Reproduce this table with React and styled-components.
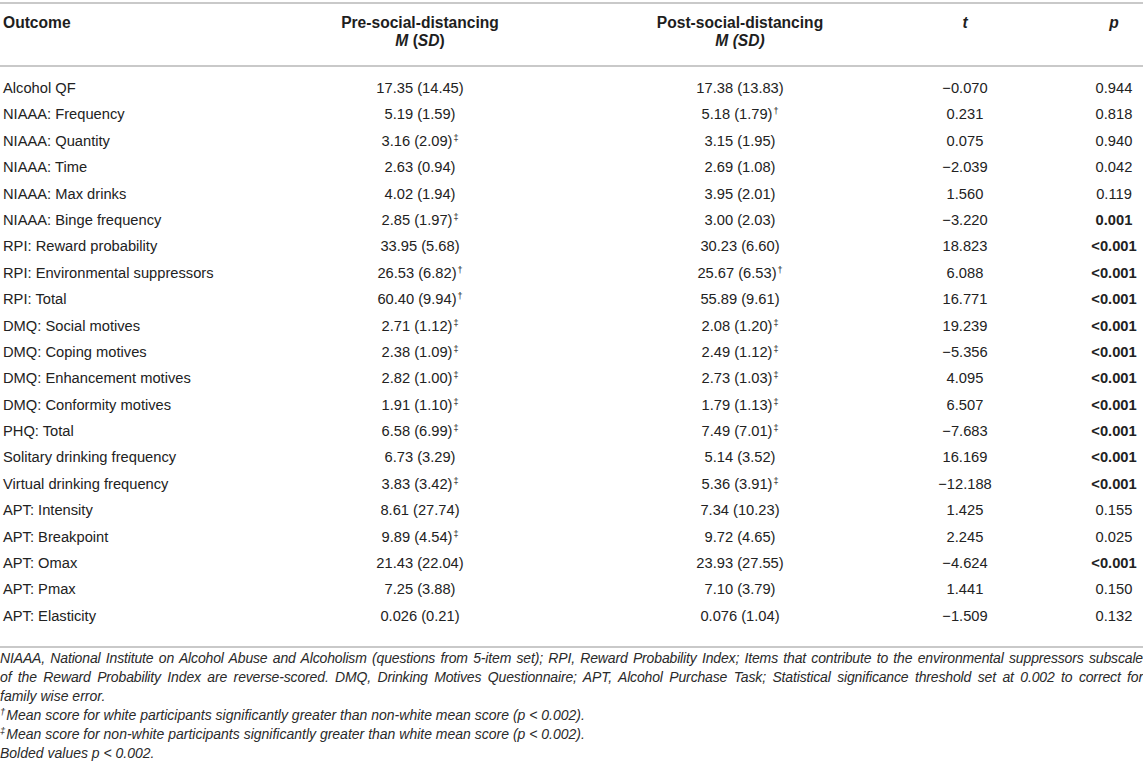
import React from 'react';
import styled, { createGlobalStyle } from 'styled-components';

const GlobalStyle = createGlobalStyle`
  html, body {
    margin: 0;
    padding: 0;
    background: #ffffff;
  }
  body {
    font-family: "Liberation Sans", Arial, Helvetica, sans-serif;
    color: #222222;
  }
`;

const Page = styled.div`
  width: 1143px;
  padding-top: 2px;
`;

const Table = styled.table`
  width: 1143px;
  table-layout: fixed;
  border-collapse: collapse;
  border-top: 2px solid #c9c9c9;
  border-bottom: 2px solid #c9c9c9;
`;

const HeadCell = styled.th`
  font-weight: bold;
  font-size: 15.6px;
  line-height: 18px;
  vertical-align: top;
  padding: 10px 0 15px ${(p) => p.$pl || 0}px;
  text-align: ${(p) => p.$align || 'center'};
  border-bottom: 2px solid #c9c9c9;
  color: #1e1e1e;
`;

const Row = styled.tr`
  height: 26.4px;
  &:first-child td {
    padding-top: 13px;
  }
  &:last-child td {
    padding-bottom: 21px;
  }
`;

const Cell = styled.td`
  font-size: 14.7px;
  line-height: 17px;
  padding: 4.7px 0 4.7px ${(p) => p.$pl || 0}px;
  text-align: ${(p) => p.$align || 'center'};
  font-weight: ${(p) => (p.$bold ? 'bold' : 'normal')};
  white-space: nowrap;
`;

const Mark = styled.sup`
  font-size: 9px;
  line-height: 0;
  vertical-align: 5px;
  margin-left: 1px;
`;

const Notes = styled.div`
  font-style: italic;
  font-size: 14px;
  line-height: 19px;
  color: #2a2a2a;
  padding-top: 1px;
`;

const Line = styled.div`
  text-align: ${(p) => (p.$justify ? 'justify' : 'left')};
  text-align-last: ${(p) => (p.$justify ? 'justify' : 'left')};
  letter-spacing: ${(p) => p.$tight || 0}px;
`;

const NoteMark = styled.sup`
  font-size: 9.5px;
  line-height: 0;
  vertical-align: 5px;
  margin-right: 1px;
`;

const D = '\u2020';
const DD = '\u2021';

const rows = [
  ['Alcohol QF', '17.35 (14.45)', '', '17.38 (13.83)', '', '\u22120.070', '0.944'],
  ['NIAAA: Frequency', '5.19 (1.59)', '', '5.18 (1.79)', D, '0.231', '0.818'],
  ['NIAAA: Quantity', '3.16 (2.09)', DD, '3.15 (1.95)', '', '0.075', '0.940'],
  ['NIAAA: Time', '2.63 (0.94)', '', '2.69 (1.08)', '', '\u22122.039', '0.042'],
  ['NIAAA: Max drinks', '4.02 (1.94)', '', '3.95 (2.01)', '', '1.560', '0.119'],
  ['NIAAA: Binge frequency', '2.85 (1.97)', DD, '3.00 (2.03)', '', '\u22123.220', '0.001', true],
  ['RPI: Reward probability', '33.95 (5.68)', '', '30.23 (6.60)', '', '18.823', '<0.001', true],
  ['RPI: Environmental suppressors', '26.53 (6.82)', D, '25.67 (6.53)', D, '6.088', '<0.001', true],
  ['RPI: Total', '60.40 (9.94)', D, '55.89 (9.61)', '', '16.771', '<0.001', true],
  ['DMQ: Social motives', '2.71 (1.12)', DD, '2.08 (1.20)', DD, '19.239', '<0.001', true],
  ['DMQ: Coping motives', '2.38 (1.09)', DD, '2.49 (1.12)', DD, '\u22125.356', '<0.001', true],
  ['DMQ: Enhancement motives', '2.82 (1.00)', DD, '2.73 (1.03)', DD, '4.095', '<0.001', true],
  ['DMQ: Conformity motives', '1.91 (1.10)', DD, '1.79 (1.13)', DD, '6.507', '<0.001', true],
  ['PHQ: Total', '6.58 (6.99)', DD, '7.49 (7.01)', DD, '\u22127.683', '<0.001', true],
  ['Solitary drinking frequency', '6.73 (3.29)', '', '5.14 (3.52)', '', '16.169', '<0.001', true],
  ['Virtual drinking frequency', '3.83 (3.42)', DD, '5.36 (3.91)', DD, '\u221212.188', '<0.001', true],
  ['APT: Intensity', '8.61 (27.74)', '', '7.34 (10.23)', '', '1.425', '0.155'],
  ['APT: Breakpoint', '9.89 (4.54)', DD, '9.72 (4.65)', '', '2.245', '0.025'],
  ['APT: Omax', '21.43 (22.04)', '', '23.93 (27.55)', '', '\u22124.624', '<0.001', true],
  ['APT: Pmax', '7.25 (3.88)', '', '7.10 (3.79)', '', '1.441', '0.150'],
  ['APT: Elasticity', '0.026 (0.21)', '', '0.076 (1.04)', '', '\u22121.509', '0.132'],
];

const App = () => {
  return (
    <Page>
      <GlobalStyle />
      <Table>
        <colgroup>
          <col style={{ width: 263 }} />
          <col style={{ width: 314 }} />
          <col style={{ width: 326 }} />
          <col style={{ width: 124 }} />
          <col style={{ width: 116 }} />
        </colgroup>
        <thead>
          <tr>
            <HeadCell $align="left" $pl={3}>Outcome</HeadCell>
            <HeadCell>
              Pre-social-distancing
              <br />
              <em>M</em> (<em>SD</em>)
            </HeadCell>
            <HeadCell>
              Post-social-distancing
              <br />
              <em>M (SD)</em>
            </HeadCell>
            <HeadCell>
              <em>t</em>
            </HeadCell>
            <HeadCell $pl={58}>
              <em>p</em>
            </HeadCell>
          </tr>
        </thead>
        <tbody>
          {rows.map(([name, pre, preMark, post, postMark, t, p, bold]) => (
            <Row key={name}>
              <Cell $align="left" $pl={3}>{name}</Cell>
              <Cell>
                {pre}
                {preMark && <Mark>{preMark}</Mark>}
              </Cell>
              <Cell>
                {post}
                {postMark && <Mark>{postMark}</Mark>}
              </Cell>
              <Cell>{t}</Cell>
              <Cell $pl={58} $bold={bold}>{p}</Cell>
            </Row>
          ))}
        </tbody>
      </Table>
      <Notes>
        <Line $justify $tight={-0.15}>
          NIAAA, National Institute on Alcohol Abuse and Alcoholism (questions from 5-item set); RPI, Reward
          Probability Index; Items that contribute to the environmental suppressors subscale
        </Line>
        <Line $justify $tight={-0.15}>
          of the Reward Probability Index are reverse-scored. DMQ, Drinking Motives Questionnaire; APT, Alcohol
          Purchase Task; Statistical significance threshold set at 0.002 to correct for
        </Line>
        <Line>family wise error.</Line>
        <Line>
          <NoteMark>{D}</NoteMark>Mean score for white participants significantly greater than non-white mean
          score (p &lt; 0.002).
        </Line>
        <Line>
          <NoteMark>{DD}</NoteMark>Mean score for non-white participants significantly greater than white mean
          score (p &lt; 0.002).
        </Line>
        <Line>Bolded values p &lt; 0.002.</Line>
      </Notes>
    </Page>
  );
};

export default App;
